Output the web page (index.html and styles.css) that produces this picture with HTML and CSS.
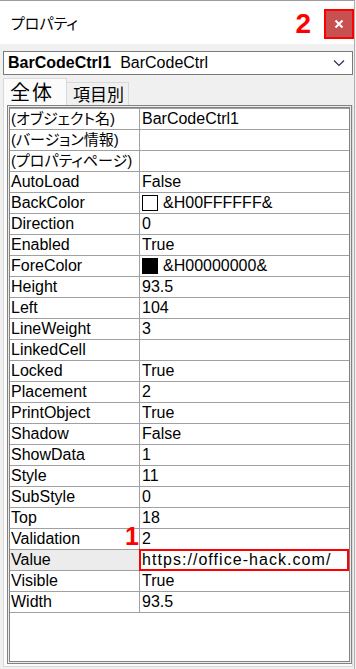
FILE: index.html
```html
<!DOCTYPE html>
<html lang="ja">
<head>
<meta charset="utf-8">
<title>プロパティ</title>
<link rel="stylesheet" href="styles.css">
</head>
<body>
<div class="window">
  <header class="titlebar">
    <span class="title">プロパティ</span>
    <span class="mark mark-2">2</span>
    <button class="close" aria-label="閉じる">
      <svg width="30" height="30" viewBox="0 0 30 30"><path d="M11.5 11.5 L18.5 18.5 M18.5 11.5 L11.5 18.5" stroke="#fff" stroke-width="2" fill="none"/></svg>
    </button>
  </header>

  <div class="combo">
    <span class="obj-name">BarCodeCtrl1</span><span class="obj-type">BarCodeCtrl</span>
    <svg class="chev" width="12" height="8" viewBox="0 0 12 8"><path d="M1 1.5 L6 6.5 L11 1.5" stroke="#2b2b55" stroke-width="1.2" fill="none"/></svg>
  </div>

  <div class="tabs">
    <div class="tab active">全体</div>
    <div class="tab">項目別</div>
  </div>

  <div class="page">
    <div class="frame">
      <div class="grid">
        <div class="row"><div class="name ja">(オブジェクト名)</div><div class="val">BarCodeCtrl1</div></div>
        <div class="row"><div class="name ja">(バージョン情報)</div><div class="val"></div></div>
        <div class="row"><div class="name ja">(プロパティページ)</div><div class="val"></div></div>
        <div class="row"><div class="name">AutoLoad</div><div class="val">False</div></div>
        <div class="row"><div class="name">BackColor</div><div class="val"><span class="swatch white"></span>&amp;H00FFFFFF&amp;</div></div>
        <div class="row"><div class="name">Direction</div><div class="val">0</div></div>
        <div class="row"><div class="name">Enabled</div><div class="val">True</div></div>
        <div class="row"><div class="name">ForeColor</div><div class="val"><span class="swatch black"></span>&amp;H00000000&amp;</div></div>
        <div class="row"><div class="name">Height</div><div class="val">93.5</div></div>
        <div class="row"><div class="name">Left</div><div class="val">104</div></div>
        <div class="row"><div class="name">LineWeight</div><div class="val">3</div></div>
        <div class="row"><div class="name">LinkedCell</div><div class="val"></div></div>
        <div class="row"><div class="name">Locked</div><div class="val">True</div></div>
        <div class="row"><div class="name">Placement</div><div class="val">2</div></div>
        <div class="row"><div class="name">PrintObject</div><div class="val">True</div></div>
        <div class="row"><div class="name">Shadow</div><div class="val">False</div></div>
        <div class="row"><div class="name">ShowData</div><div class="val">1</div></div>
        <div class="row"><div class="name">Style</div><div class="val">11</div></div>
        <div class="row"><div class="name">SubStyle</div><div class="val">0</div></div>
        <div class="row"><div class="name">Top</div><div class="val">18</div></div>
        <div class="row"><div class="name">Validation</div><div class="val">2</div></div>
        <div class="row selected"><div class="name">Value</div><div class="val url">https://office-hack.com/<span class="highlight"></span></div></div>
        <div class="row"><div class="name">Visible</div><div class="val">True</div></div>
        <div class="row"><div class="name">Width</div><div class="val">93.5</div></div>
        <span class="mark mark-1">1</span>
      </div>
    </div>
  </div>
</div>
</body>
</html>
```

FILE: styles.css
```css
html, body {
  margin: 0;
  padding: 0;
}
body {
  width: 356px;
  height: 669px;
  overflow: hidden;
  background: #f0f0f0;
  font-family: "Liberation Sans", "Noto Sans CJK JP", sans-serif;
  color: #000;
}
.window {
  box-sizing: border-box;
  width: 355px;
  height: 669px;
  border-top: 1px solid #9c9c9c;
  border-right: 1px solid #b0b0b0;
  background: #f0f0f0;
}
.titlebar {
  height: 43px;
  background: #fff;
  display: flex;
  align-items: flex-start;
  box-sizing: border-box;
  padding: 8px 0 0 11px;
}
.title {
  align-self: center;
  font-family: "Noto Sans CJK JP", sans-serif;
  font-feature-settings: "palt";
  font-size: 15px;
  line-height: 20px;
  margin-top: -7px;
  flex: 1;
}
.mark {
  color: #ff0000;
  font-weight: bold;
  font-family: "Liberation Sans", sans-serif;
}
.mark-2 {
  font-size: 28px;
  line-height: 28px;
  margin-right: 13px;
  margin-top: 1px;
}
.close {
  width: 30px;
  height: 30px;
  padding: 0;
  margin: 0;
  box-sizing: border-box;
  border: 2px solid #ff0000;
  background: #c75050;
  display: flex;
  align-items: center;
  justify-content: center;
  overflow: hidden;
}
.close svg {
  flex: none;
}
.combo {
  margin: 7px 0 0 3px;
  width: 350px;
  height: 24px;
  box-sizing: border-box;
  border: 1px solid #7a7a7a;
  background: #fff;
  display: flex;
  align-items: center;
  padding-left: 4px;
  font-size: 16px;
  line-height: 22px;
}
.obj-name {
  font-weight: bold;
}
.obj-type {
  margin-left: 9px;
  flex: 1;
}
.chev {
  margin-right: 7px;
}
.tabs {
  display: flex;
  align-items: flex-end;
  margin: 3px 0 0 3px;
  height: 27px;
}
.tab {
  box-sizing: border-box;
  font-family: "Noto Sans CJK JP", sans-serif;
  font-size: 17px;
  border: 1px solid #d9d9d9;
  border-bottom: none;
  background: #f0f0f0;
  height: 23px;
  width: 63px;
  margin-left: -1px;
  padding-left: 6px;
  line-height: 22px;
}
.tab.active {
  margin-left: 0;
  width: 64px;
  height: 27px;
  background: #fbfbfb;
  font-size: 20px;
  letter-spacing: 2px;
  padding-left: 6px;
  line-height: 26px;
  position: relative;
  z-index: 1;
}
.page {
  margin-left: 3px;
  width: 350px;
  box-sizing: border-box;
  border: 1px solid #d9d9d9;
  border-top: none;
  background: #fbfbfb;
  padding: 0 0 2px 3px;
}
.frame {
  width: 345px;
  height: 559px;
  box-sizing: border-box;
  border: 1px solid #828282;
  padding: 1px;
  background: #ececec;
}
.grid {
  height: 100%;
  box-sizing: border-box;
  border: 1px solid #828282;
  background: #fff;
  position: relative;
}
.row {
  display: grid;
  grid-template-columns: 129px 1fr;
  height: 21px;
  box-sizing: border-box;
  border-bottom: 1px solid #a0a0a0;
  font-size: 16px;
  line-height: 20px;
  white-space: nowrap;
}
.row:first-child {
  height: 22px;
  border-top: 1px solid #a0a0a0;
}
.name {
  padding-left: 1px;
  overflow: hidden;
}
.name.ja {
  font-size: 15px;
  font-feature-settings: "palt";
}
.val {
  border-left: 1px solid #a0a0a0;
  padding-left: 2px;
  display: flex;
  align-items: center;
  position: relative;
}
.swatch {
  box-sizing: border-box;
  width: 16px;
  height: 16px;
  border: 1px solid #000;
  margin: 0 5px 0 0;
}
.swatch.white { background: #fff; }
.swatch.black { background: #000; }
.selected .name {
  background: #ececec;
}
.url {
  letter-spacing: 1.05px;
}
.highlight {
  position: absolute;
  left: -1px;
  right: 0;
  top: -1px;
  bottom: -1px;
  border: 2px solid #ff0000;
}
.mark-1 {
  position: absolute;
  left: 115px;
  top: 416px;
  font-size: 25px;
  line-height: 25px;
}
```
